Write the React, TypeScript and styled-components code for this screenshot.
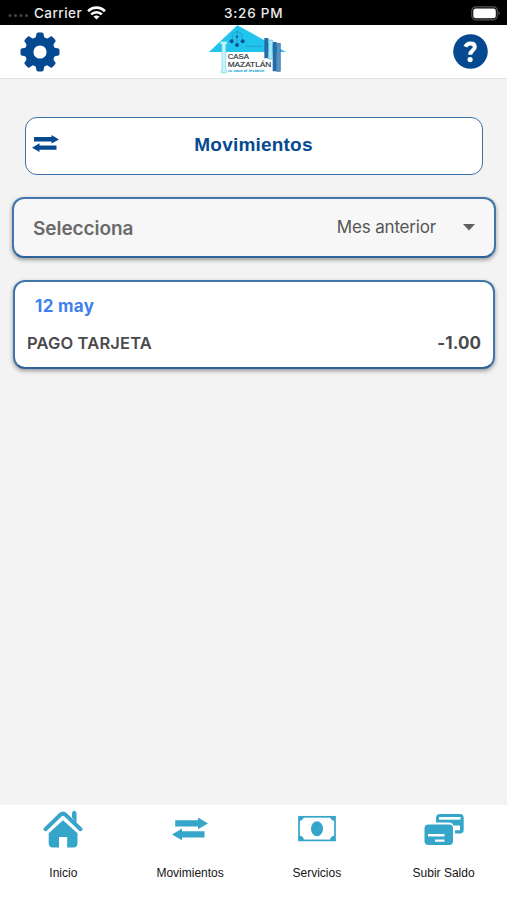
import React from "react";
import styled, { createGlobalStyle } from "styled-components";

const NAVY = "#054a91";
const TEAL = "#35a5ca";

const GlobalStyle = createGlobalStyle`
  * { box-sizing: border-box; }
  body { margin: 0; background: #f3f3f3; }
`;

const Screen = styled.div`
  width: 100%;
  height: 100vh;
  display: flex;
  flex-direction: column;
  overflow: hidden;
  background: #f3f3f3;
  font-family: Inter, "Liberation Sans", sans-serif;
  svg { display: block; flex: none; }
`;

const StatusBar = styled.div`
  flex: none;
  height: 25px;
  padding: 1px 6px 0 8px;
  display: grid;
  grid-template-columns: 216px auto 1fr;
  align-items: center;
  background: #000;
  color: #ececec;
  font-size: 13.5px;
  font-weight: 500;
  line-height: 24px;
`;

const Carrier = styled.div`
  display: flex;
  align-items: center;
  letter-spacing: 0.45px;
  span { margin: 0 5px 0 5px; }
`;

const Clock = styled.div`
  letter-spacing: 0.75px;
`;

const Battery = styled.div`
  justify-self: end;
`;

const Header = styled.header`
  flex: none;
  height: 54px;
  padding: 0 19px 0 20px;
  display: grid;
  grid-template-columns: 189px 1fr auto;
  align-items: center;
  background: #fff;
  border-bottom: 1px solid #e2e2e2;
`;

const Brand = styled.div`
  align-self: start;
`;

const Content = styled.main`
  flex: 1;
  min-height: 0;
  padding: 38px 11px 0 12px;
  display: flex;
  flex-direction: column;
`;

const TitleBox = styled.h1`
  margin: 0 13px 22px 13px;
  height: 58px;
  padding: 0 34px 2px 6px;
  display: grid;
  grid-template-columns: 27px 1fr;
  align-items: center;
  background: #fff;
  border: 1.5px solid #3c70a8;
  border-radius: 12px;
  color: ${NAVY};
  font: bold 19px/24px "Liberation Sans", Arial, sans-serif;
  letter-spacing: 0.2px;
  text-align: center;
  svg { margin-top: -4px; }
`;

const Card = styled.section<{ $muted?: boolean }>`
  border: 2px solid #4275a9;
  border-bottom-color: #2c639d;
  border-radius: 12px;
  background: ${(p) => (p.$muted ? "#f7f7f7" : "#fff")};
  box-shadow: 0 2px 4px rgba(0, 0, 0, 0.38);
`;

const SelectCard = styled(Card)`
  height: 61px;
  margin-bottom: 22px;
  padding: 0 19px 0 19px;
  display: flex;
  align-items: center;
  color: #555;
`;

const SelectLabel = styled.span`
  flex: 1;
  padding-top: 2px;
  color: #6a6a6a;
  font-size: 19px;
  font-weight: 600;
  letter-spacing: -0.06px;
`;

const SelectValue = styled.span`
  margin: -1px 27px 0 0;
  font-size: 17px;
  letter-spacing: -0.18px;
`;

const MovementCard = styled(Card)`
  height: 89px;
  margin: 0 1px;
  padding: 14px 12px 0;
  display: flex;
  flex-direction: column;
  gap: 17px;
  line-height: 20px;
`;

const DateLabel = styled.div`
  padding-left: 8px;
  color: #3f80ee;
  font-size: 17px;
  font-weight: 700;
  letter-spacing: 0.3px;
`;

const MovementRow = styled.div`
  display: flex;
  justify-content: space-between;
  color: #4a4a4c;
`;

const Concept = styled.span`
  font-size: 16.5px;
  font-weight: 600;
  letter-spacing: 0.15px;
`;

const Amount = styled.span`
  font-size: 17px;
  font-weight: 700;
  letter-spacing: 0.05px;
`;

const TabBar = styled.nav`
  flex: none;
  height: 95px;
  display: grid;
  grid-template-columns: repeat(4, 1fr);
  background: #fff;
`;

const Tab = styled.a`
  display: flex;
  flex-direction: column;
  align-items: center;
  padding-top: 3px;
  gap: 15px;
  color: #151515;
  font: 12px/16px "Liberation Sans", Arial, sans-serif;
`;

const Wifi = () => (
  <svg width="19" height="14" viewBox="0 0 19 14" fill="none" stroke="#fff" strokeWidth="2.7">
    <path d="M1.1 5.2C5.7.5 13.3.5 17.9 5.2M4.2 8.4C7.2 5.5 11.8 5.5 14.8 8.4" />
    <path d="M6.5 10.5C8.2 9 10.8 9 12.5 10.5L9.5 13.5Z" fill="#fff" stroke="none" />
  </svg>
);

const SignalDots = () => (
  <svg width="21" height="8" viewBox="0 0 21 8" fill="#454545">
    {[2, 7.5, 13, 18.5].map((x) => <circle key={x} cx={x} cy="6.5" r="1.5" />)}
  </svg>
);

const Gear = () => (
  <svg width="40" height="40" viewBox="-20 -20 40 40" fill={NAVY}>
    {[0, 45, 90, 135, 180, 225, 270, 315].map((a) => (
      <path key={a} transform={`rotate(${a})`} d="M-6-13C-4.5-14-3.9-15-3.7-17.5Q-3.5-19.5-2-19.5H2Q3.5-19.5 3.7-17.5C3.9-15 4.5-14 6-13Z" />
    ))}
    <circle r="10.8" fill="none" stroke={NAVY} strokeWidth="8.4" />
  </svg>
);

const Logo = () => (
  <svg width="78" height="49" viewBox="57 77 234 147">
    <path d="M142 78 288 158H57Z" fill="#20c4ed" />
    <path d="M112 158H248V208H112Z" fill="#fff" />
    <g fill="none" stroke="#2787b0" strokeWidth="1.8">
      <path d="M127 125V106Q141 88 156 106V125M141 94V136M167 141H216" />
    </g>
    <g fill="#07549b">
      <circle cx="125" cy="126" r="6" />
      <circle cx="141" cy="137" r="6" />
      <circle cx="158" cy="126" r="6" />
      <circle cx="141" cy="112" r="3.5" />
    </g>
    <path d="M91 127H111V134H107V213H110V220H93V213H96V134H91Z" fill="#c9f4fc" stroke="#73d9ed" strokeWidth="2" />
    <path d="M223 116H235V177H223ZM248 128H260V216H248Z" fill="#286aa7" />
    <path d="M236 122H247V179H236Z" fill="#a9e9f6" stroke="#48bbdc" strokeWidth="2" />
    <path d="M260 132H271V216H260Z" fill="#5b92c4" stroke="#286aa7" strokeWidth="2" />
    <g fontFamily="Liberation Sans, Arial, sans-serif" fill="#252b32" stroke="#252b32" strokeWidth=".4" fontSize="21">
      <text x="113" y="180" textLength="64" lengthAdjust="spacingAndGlyphs">CASA</text>
      <text x="113" y="202" textLength="131" lengthAdjust="spacingAndGlyphs">MAZATLÁN</text>
    </g>
    <text x="114" y="217" textLength="110" lengthAdjust="spacingAndGlyphs" fill="#0a9fcd" fontSize="12" fontWeight="bold" fontStyle="italic" fontFamily="Liberation Sans, Arial, sans-serif">tu casa al instante</text>
  </svg>
);

const Help = () => (
  <svg width="35" height="35" viewBox="0 0 35 35">
    <circle cx="17.5" cy="17.5" r="17.3" fill={NAVY} />
    <path d="M12.4 12.8C14 8.6 21.4 8 21.8 12.8C22 16.5 17.2 16.3 17.2 20.8" fill="none" stroke="#fff" strokeWidth="4" />
    <circle cx="17.1" cy="25.6" r="2.6" fill="#fff" />
  </svg>
);

const TransferArrows = () => (
  <svg width="27" height="17" viewBox="0 0 27 17" fill={NAVY}>
    <path d="M2 2.1H19.5V0L27 4.4 19.5 8.6V6.5H2ZM24.5 10.4H7.5V8.3L0 12.7 7.5 17V14.8H24.5Z" />
  </svg>
);

const House = () => (
  <svg width="40" height="42" viewBox="0 0 40 42">
    <path d="M29.5 10V5.2Q29.5 3.2 31.2 3.2Q33 3.2 33 5.2V15" fill={TEAL} stroke={TEAL} strokeWidth="1" />
    <path d="M2.5 21.2 17.4 6.8Q20 4.2 22.6 6.8L37.5 21.2" fill="none" stroke={TEAL} strokeWidth="4" strokeLinecap="round" />
    <path d="M5.7 25.3 20 12.3 34.5 25.3V35Q34.5 39.5 30.5 39.5H24.2V29H16V39.5H10Q5.7 39.5 5.7 35Z" fill={TEAL} />
  </svg>
);

const MovementsTabIcon = () => (
  <svg width="36" height="42" viewBox="0 0 36 42" fill={TEAL}>
    <path d="M3.2 12.3H26V9.5L36 15.5 26 21.3V18.5H3.2ZM32.5 23.3H10V20.5L0 26.4 10 32.3V29.4H32.5Z" />
  </svg>
);

const BankNote = () => (
  <svg width="38" height="42" viewBox="0 0 38 42" fill={TEAL}>
    <rect x="1" y="8.8" width="36" height="23.6" fill="none" stroke={TEAL} strokeWidth="1.7" />
    <path d="M1 8H6Q5.8 12.7 1 13ZM37 8H32Q32.2 12.7 37 13ZM1 32.5H6Q5.8 27.8 1 27.5ZM37 32.5H32Q32.2 27.8 37 27.5Z" />
    <ellipse cx="19" cy="20.7" rx="6" ry="7.5" />
  </svg>
);

const CardsIcon = () => (
  <svg width="40" height="42" viewBox="0 0 40 42">
    <path d="M12 14.5V10.2Q12 6 16 6H36Q39.7 6 39.7 10V21.5Q39.7 25.6 36 25.6H31V22.3H36V17.5H29.5Q28.5 14.5 25 14.5Z" fill={TEAL} />
    <path d="M15 9H36.5V11.7H15Z" fill="#fff" />
    <rect x=".5" y="16.5" width="28.5" height="20.5" rx="4" fill={TEAL} />
    <path d="M4 26H20.5V28.5H4ZM11 31.5H20.5V33.8H11Z" fill="#fff" />
  </svg>
);

const tabs = [
  { label: "Inicio", icon: <House /> },
  { label: "Movimientos", icon: <MovementsTabIcon /> },
  { label: "Servicios", icon: <BankNote /> },
  { label: "Subir Saldo", icon: <CardsIcon /> },
];

export default function App() {
  return (
    <Screen>
      <GlobalStyle />
      <StatusBar>
        <Carrier><SignalDots /><span>Carrier</span><Wifi /></Carrier>
        <Clock>3:26 PM</Clock>
        <Battery>
          <svg width="30" height="15" viewBox="0 0 30 15">
            <rect x=".8" y=".8" width="25.5" height="13" rx="4" fill="none" stroke="#555" strokeWidth="1.2" />
            <rect x="2.3" y="2.5" width="22.5" height="9.7" rx="2.5" fill="#fff" />
            <path d="M27.6 5.3Q30 7.3 27.6 9.3Z" fill="#666" />
          </svg>
        </Battery>
      </StatusBar>
      <Header><Gear /><Brand><Logo /></Brand><Help /></Header>
      <Content>
        <TitleBox><TransferArrows /><span>Movimientos</span></TitleBox>
        <SelectCard $muted>
          <SelectLabel>Selecciona</SelectLabel>
          <SelectValue>Mes anterior</SelectValue>
          <svg width="12" height="7" viewBox="0 0 12 7"><path d="M0 0H12L6 6.5Z" fill="#606060" /></svg>
        </SelectCard>
        <MovementCard>
          <DateLabel>12 may</DateLabel>
          <MovementRow><Concept>PAGO TARJETA</Concept><Amount>-1.00</Amount></MovementRow>
        </MovementCard>
      </Content>
      <TabBar>
        {tabs.map((tab) => <Tab key={tab.label}>{tab.icon}<span>{tab.label}</span></Tab>)}
      </TabBar>
    </Screen>
  );
}
